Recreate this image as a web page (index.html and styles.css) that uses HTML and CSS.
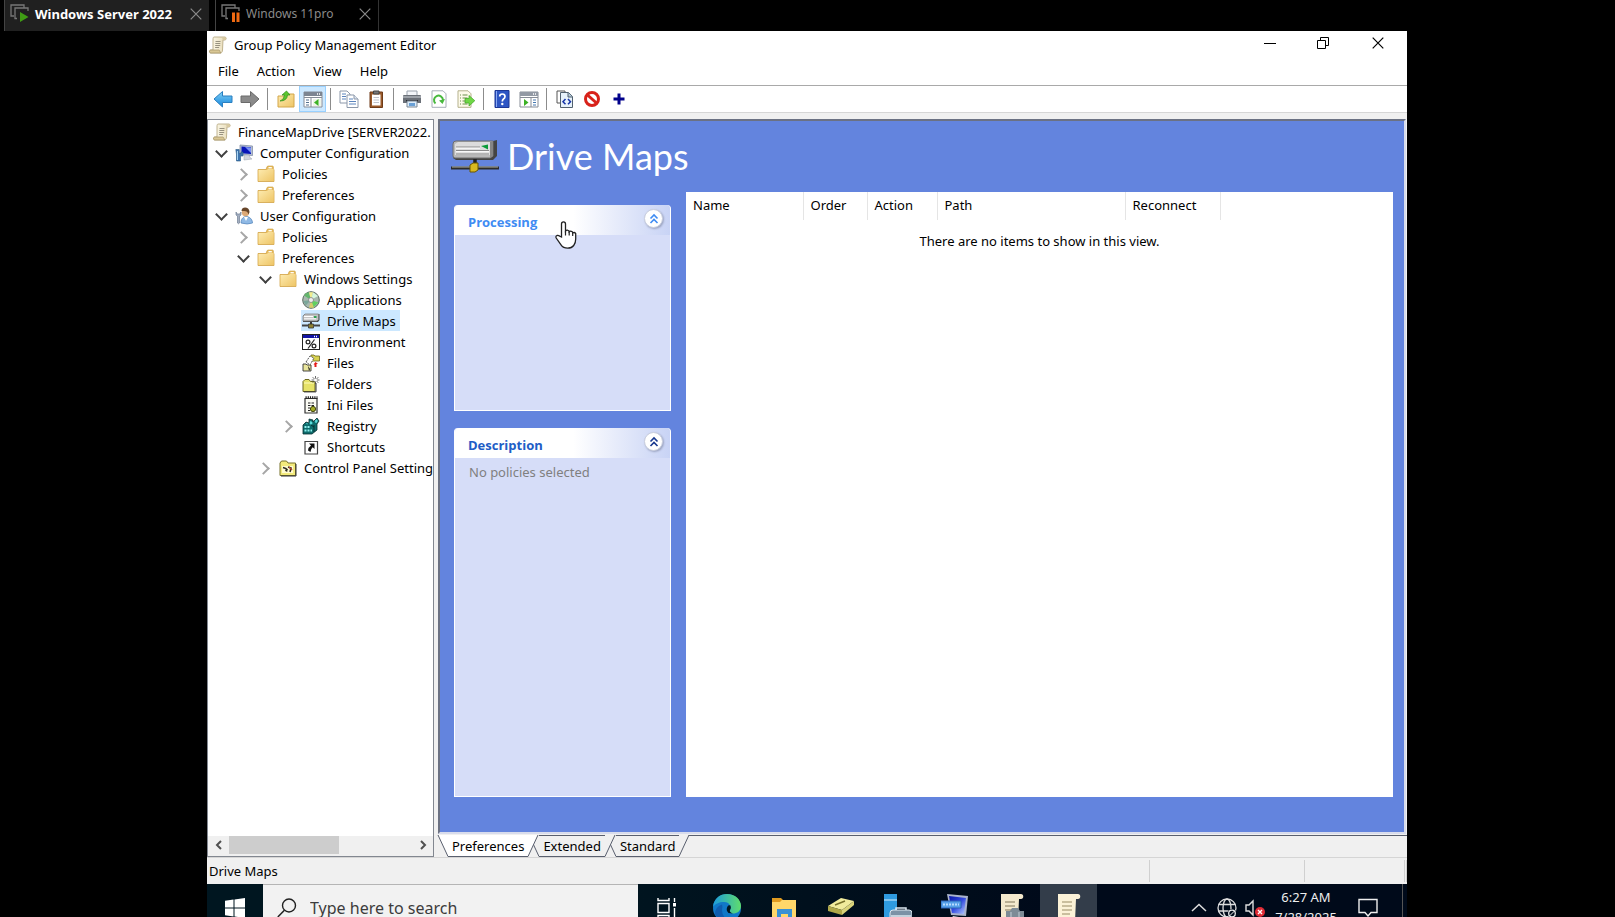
FILE: index.html
```html
<!DOCTYPE html>
<html lang="en">
<head>
<meta charset="utf-8">
<title>Group Policy Management Editor</title>
<link rel="stylesheet" href="styles.css">
</head>
<body>
<svg class="defs" aria-hidden="true">
  <defs>
    <linearGradient id="g-blue" x1="0" y1="0" x2="0" y2="1"><stop offset="0" stop-color="#7fd0f5"/><stop offset="1" stop-color="#1585dc"/></linearGradient>
    <linearGradient id="g-folder" x1="0" y1="0" x2="1" y2="1"><stop offset="0" stop-color="#fdebb0"/><stop offset="1" stop-color="#eec566"/></linearGradient>
    <linearGradient id="g-paper" x1="0" y1="0" x2="1" y2="0"><stop offset="0" stop-color="#fffdf0"/><stop offset="1" stop-color="#e6d9b4"/></linearGradient>
    <linearGradient id="g-edge" x1="0" y1="0" x2="1" y2="0"><stop offset="0" stop-color="#1c9bdc"/><stop offset="1" stop-color="#5fdd6c"/></linearGradient>
    <linearGradient id="g-screen" x1="0" y1="0" x2="1" y2="1"><stop offset="0" stop-color="#0a18a8"/><stop offset="0.5" stop-color="#3048e0"/><stop offset="1" stop-color="#b8ccff"/></linearGradient>
  </defs>
  <symbol id="scroll" viewBox="0 0 18 18">
    <path d="M5 1h11c1.500 0 1.500 3 0 3h-2l-.5 10c0 2-1 3-2 3H2c-2 0-2-3 0-3h2L4 4c0-2 .3-3 1-3z" fill="url(#g-paper)" stroke="#b9ab86" stroke-width=".9"/>
    <path d="M6.500 5.500h5M6.300 7.500h5M6.200 9.500h5M6.100 11.500h4" stroke="#8d8877" stroke-width=".9"/>
    <path d="M2 14h8c1 0 1 3 2 3H2c-2 0-2-3 0-3z" fill="#d9c795" stroke="#a39264" stroke-width=".7"/>
    <path d="M14 1.500c-1 .5-1 2 0 2.500h2c1.500-.3 1.500-2.500 0-3z" fill="#d8c9a0"/>
  </symbol>
  <symbol id="folder" viewBox="0 0 18 18">
    <path d="M1 4.500h8l1-2.500q.3-.9 1-.9h4.500q.8 0 .8.900v2.500h.7V16.500H1z" fill="#e9bd5c" stroke="#d2a54a" stroke-width=".8"/>
    <path d="M11.500 2.700h3.300" stroke="#fff" stroke-width="1.300"/>
    <path d="M1.500 5h8.500l1-.9h5.700v12H1.500z" fill="url(#g-folder)"/>
  </symbol>
  <symbol id="computer" viewBox="0 0 18 18">
    <path d="M5 1l12.500 1v9.500L5 10.500z" fill="#b5bfd3" stroke="#8490a8" stroke-width=".8"/>
    <path d="M6.500 2.500l9.500.8v6.700l-9.500-.8z" fill="#0816b8"/><path d="M10 3l6 .4v5.500z" fill="#7a92f5"/>
    <path d="M9 11h5l1 2.500 2 1.500-8 1z" fill="#d2d6dc" stroke="#9aa1ad" stroke-width=".5"/>
    <path d="M.8 5.500h3.400v4H6V8h2v4H5.500v5H1.500V10z" fill="#3d74ae" stroke="#265785" stroke-width=".6"/><path d="M2.500 7v9" stroke="#a9d5f5"/>
  </symbol>
  <symbol id="user" viewBox="0 0 18 18">
    <path d="M6 16c0-5 3-6.500 5.500-6.500S17.500 12 17.500 16q-5 2-11.500 0z" fill="#8fb9e5" stroke="#4d80b8" stroke-width=".7"/>
    <circle cx="10.500" cy="5.500" r="3.700" fill="#dca977"/><path d="M6.500 4c0-5 8-4.500 8 1l-1 2.500c-.5-2.500-2-3.500-4.500-3.500z" fill="#67462a"/>
    <path d="M9 10l2 4 2-4z" fill="#fff"/>
    <path d="M1 5v3l1.500 1.200V16q1 1.500 2 0V9.200L6 8V5L4.700 7H2.300z" fill="#a3aec0" stroke="#62728a" stroke-width=".6"/>
  </symbol>
  <symbol id="disc" viewBox="0 0 18 18">
    <circle cx="9" cy="9" r="8.300" fill="#a8b8ae" stroke="#5b6a60"/><path d="M9 9L2 4.500A8 8 0 0 1 7 1.300z" fill="#63b66c"/><path d="M9 9L7 1.300h4z" fill="#f2ed8d"/><path d="M9 9l2-7.700 5 3.700z" fill="#d5f6dc"/><path d="M9 9l2 7.700 5.500-5.200z" fill="#62d060"/><path d="M9 9l-2 7.700 5 0z" fill="#d6cc69"/><path d="M9 9l-7.700 1 2.400 4.500z" fill="#7ba79a"/><circle cx="9" cy="9" r="2.500" fill="#eee" stroke="#777" stroke-width=".7"/>
  </symbol>
  <symbol id="drive" viewBox="0 0 48 34" preserveAspectRatio="none">
    <path d="M7 2h35l4-1v16l-4 4H5l-3-2V7z" fill="#444"/>
    <path d="M5 2h37v15l-3 2H4q-2 0-2-2V5q0-3 3-3z" fill="#b9b9b9" stroke="#6d6d6d"/>
    <path d="M4 5l3-2h32v13H4z" fill="#dcdcdc"/><path d="M5 8h24M5 11.500h33M5 15h33" stroke="#8b8b8b" stroke-width="1.200"/><path d="M5 9.200h24M5 12.700h33" stroke="#fff"/>
    <path d="M30 7l7-1.500v5z" fill="#0a9a38"/><path d="M39 3l3-1v15l-3 2z" fill="#858585"/>
    <path d="M24 20v7" stroke="#222" stroke-width="3.500"/><path d="M0 29h48" stroke="#2c2c2c" stroke-width="3" /><path d="M1 28h46" stroke="#b0b0a0" stroke-width="1"/>
    <path d="M19 26l3-2h5v7l-3 2h-5z" fill="#d8b820" stroke="#6b5700"/>
  </symbol>
  <symbol id="drive-small" viewBox="0 0 18 18">
    <path d="M1 4l2-2h14.500v6L16 10H1z" fill="#444"/><path d="M1 4l2-2h13.500v5.500L15 9H1z" fill="#c4c4c4" stroke="#777" stroke-width=".7"/>
    <path d="M2 4.500h9M2 6.800h12" stroke="#fff"/><path d="M12 5h2.500" stroke="#0a9a38" stroke-width="1.600"/><path d="M0 13.500h6M12 13.500h6" stroke="#444" stroke-width="2"/><path d="M9 10v2" stroke="#333" stroke-width="2"/><path d="M6.500 12h5v4h-5z" fill="#8e8030" stroke="#333" stroke-width=".8"/>
  </symbol>
  <symbol id="env" viewBox="0 0 18 18">
    <rect x=".5" y="1.500" width="17" height="15" fill="#fff" stroke="#222"/><path d="M1 3.500h16" stroke="#1214a5" stroke-width="3"/><path d="M12 3.500h1m1 0h1" stroke="#fff" stroke-width="1.500"/><path d="M12.500 6.500L6 15.500" stroke="#222" stroke-width="1.200"/><circle cx="6" cy="9" r="1.900" fill="none" stroke="#222" stroke-width="1.200"/><circle cx="12" cy="13" r="1.900" fill="none" stroke="#222" stroke-width="1.200"/>
  </symbol>
  <symbol id="files" viewBox="0 0 18 18">
    <path d="M9 1h3l1 1h4.500v5H9z" fill="#d8d250" stroke="#6a661e" stroke-width=".8"/><path d="M1 10h3l1 1h4v6H1z" fill="#e9e59c" stroke="#333" stroke-width=".9"/><path d="M4 8l4-6 4 2-4 7z" fill="#fff" stroke="#555" stroke-dasharray="2 1"/><path d="M6 12l2 3-1 2z" fill="#111"/><path d="M11.500 10.500l2-2.500 2.500 2h-1.500v3h-2v-2.500z" fill="#e31a1a"/>
  </symbol>
  <symbol id="folders" viewBox="0 0 18 18">
    <path d="M1 6.500l2-2h4l1.500 2H13V16.500H1z" fill="#e6e268" stroke="#6d6920"/><path d="M2 8h10" stroke="#fffcc0"/><path d="M2 16.900h12V8" fill="none" stroke="#333"/><path d="M13.500 1v8M9.500 5h8M10.700 2.200l5.600 5.600M16.300 2.200l-5.600 5.600" stroke="#444" stroke-width=".8"/><circle cx="13.500" cy="5" r="1.500" fill="#fff"/>
  </symbol>
  <symbol id="ini" viewBox="0 0 18 18">
    <path d="M3 2.500h12V17H3z" fill="#fbfbf4" stroke="#333" stroke-width="1.200"/><path d="M3.500 1.500h12" stroke="#222" stroke-width="2.500" stroke-dasharray="1.200 1"/><path d="M6 7h2.500M9.500 7H12M6 9.500h2.500M9.500 9.500H12M6 12h2M6 14.500h2" stroke="#222" stroke-width="1.200"/><circle cx="11" cy="13" r="2.600" fill="#a5ac25" stroke="#40440a"/>
  </symbol>
  <symbol id="registry" viewBox="0 0 18 18">
    <path d="M1 8l3-3 3 1V2l4 1v2l4-4 2 3-2 3v6l-5 4H1z" fill="#0d6c6c" stroke="#062f30" stroke-width=".8"/><path d="M2.500 9h2v2h-2zM5.500 9h2v2h-2zM2.500 12.500h2v2h-2zM5.500 12.500h2v2h-2zM8.500 12.500h1.500v2H8.500z" fill="#8ff0ee"/><path d="M8 4.500l2 .6v2H8zM13 4l1.500-1.500 1 1.500-1.500 2zM4 6.500l2 .5" fill="#5cdedd" stroke="#5cdedd" stroke-width=".6"/><path d="M12 8v7M9 8l3 2" stroke="#062f30"/>
  </symbol>
  <symbol id="shortcut" viewBox="0 0 18 18">
    <path d="M3 3.500h12.500V16H3z" fill="#fff" stroke="#444" stroke-width="1.200"/><path d="M7 5.500h5.500V11l-1.800-1.800Q8.500 11 8.500 14L6 12.500Q6.500 9 9 7.500z" fill="#111"/>
  </symbol>
  <symbol id="panel" viewBox="0 0 18 18">
    <path d="M1 4l1.500-2h5L9 4h7.500v12.500H1z" fill="#f3ea7c" stroke="#77702a"/><path d="M3 7h11v7H3z" fill="#fffbd0"/><path d="M4 8.500l3 1 1 3M9 8l3 1-1 4M6.500 12l2-2" fill="none" stroke="#2b2920" stroke-width="1.500"/><path d="M10 8l3 3" stroke="#b1452c" stroke-width="1.400"/><path d="M2 17h15V5" fill="none" stroke="#333"/>
  </symbol>
  <symbol id="vm" viewBox="0 0 20 20">
    <path d="M4 12H1V1h13v3M7 14.500H5V4h13v3" fill="none" stroke="#777" stroke-width="1.300"/>
  </symbol>
  <symbol id="x" viewBox="0 0 12 12"><path d="M.7.7l10.600 10.600M11.300.7L.7 11.300" fill="none" stroke="currentColor" stroke-width="1.200"/></symbol>
  <symbol id="arrow" viewBox="0 0 20 18"><path d="M1 9l8.500-7.500V6H19v6.500H9.500v4.500z" fill="var(--f)" stroke="var(--s)"/></symbol>
</svg>

<nav class="vm-tabs" aria-label="Virtual machines">
  <div class="vm-tab vm-active">
    <svg class="i20" viewBox="0 0 20 20"><use href="#vm"/><path d="M10 8l8.500 5-8.500 5z" fill="#3f9c14"/></svg>
    <button class="vm-name">Windows Server 2022</button>
    <button class="vm-close" aria-label="Close Windows Server 2022"><svg class="i12"><use href="#x"/></svg></button>
  </div>
  <div class="vm-tab vm-idle">
    <svg class="i20" viewBox="0 0 20 20"><use href="#vm"/><path d="M11 8.500h3v9.500h-3zM15.500 8.500h3v9.500h-3z" fill="#f06a12"/></svg>
    <button class="vm-name">Windows 11pro</button>
    <button class="vm-close" aria-label="Close Windows 11pro"><svg class="i12"><use href="#x"/></svg></button>
  </div>
</nav>

<main class="guest">
  <header class="titlebar">
    <svg class="i18"><use href="#scroll"/></svg>
    <h1 class="title">Group Policy Management Editor</h1>
    <div class="caption">
      <button aria-label="Minimize"><svg class="i12" viewBox="0 0 12 12"><path d="M0 6.500h12" stroke="#000"/></svg></button>
      <button aria-label="Restore"><svg class="i12" viewBox="0 0 12 12"><path d="M.5 3.500h8v8h-8zM3.500 3.500v-3h8v8h-3" fill="none" stroke="#000"/></svg></button>
      <button aria-label="Close"><svg class="i12"><use href="#x"/></svg></button>
    </div>
  </header>
  <nav class="menubar" aria-label="Menu">
    <button>File</button><button>Action</button><button>View</button><button>Help</button>
  </nav>
  <div class="toolbar" role="toolbar">
    <button aria-label="Back"><svg class="i20 blue"><use href="#arrow"/></svg></button>
    <button aria-label="Forward"><svg class="i20 flip"><use href="#arrow"/></svg></button>
    <span class="sep"></span>
    <button aria-label="Up one level"><svg class="i18" viewBox="0 0 18 18"><path d="M1 6h7l1.500-2H17v13H1z" fill="url(#g-folder)" stroke="#d3a64b"/><path d="M3 11q4-1 4.500-6H5l4.500-4L13 5h-2.500Q10 11 3 11z" fill="#5cc52f" stroke="#2f8f18" stroke-width=".7"/></svg></button>
    <button class="pressed" aria-label="Show or hide console tree"><svg class="i20" viewBox="0 0 20 18"><path d="M1 2h18v15H1z" fill="#fff" stroke="#868c96"/><path d="M1 4h18" stroke="#7d8591" stroke-width="4"/><path d="M14 4h1m1 0h1" stroke="#fff" stroke-width="1.500"/><path d="M1 7.500h18M8 8v9" stroke="#868c96"/><path d="M3 10h3M3 12.500h3M3 15h3" stroke="#55718f"/><path d="M10 9h8v7h-8z" fill="#edf4e8"/><path d="M15.500 9v7L11 12.500z" fill="#3cb125"/></svg></button>
    <span class="sep"></span>
    <button aria-label="Copy"><svg class="i20" viewBox="0 0 20 18"><g fill="#fff" stroke="#8c98aa"><path d="M1 1h7l3 3v9H1z"/><path d="M8 5h7l4 4v8.500H8z"/><path d="M15 5v4h4" fill="#dde5f0"/></g><path d="M3 4h4M3 6.500h4M3 9h4M10 9h4M10 11.500h7M10 14h7" stroke="#5b84bd"/></svg></button>
    <button aria-label="Paste"><svg class="i18" viewBox="0 0 18 18"><path d="M3 2h12.500v15.500H3z" fill="#9a5a2a" stroke="#6e3b18"/><path d="M5 4.500h8.500V15.500H5z" fill="#fff"/><path d="M6.500 1h5.500v3H6.500z" fill="#777" stroke="#444"/><path d="M6.500 7.500h5.500M6.500 10h5.500M6.500 12.500h5.500" stroke="#c0c4cc"/></svg></button>
    <span class="sep"></span>
    <button aria-label="Print"><svg class="i20" viewBox="0 0 20 18"><path d="M5 1h10v6H5z" fill="#f4f6fa" stroke="#9ba3ae"/><path d="M1 6q0-1 1-1h16q1 0 1 1v7H1z" fill="#6b7078"/><path d="M1 6h18v2H1z" fill="#9da2a9"/><path d="M4 10h12v2H4z" fill="#2a2d31"/><path d="M5 11h10v6H5z" fill="#dcecfa" stroke="#7a8794"/><path d="M7 13h6v3H7z" fill="#69a0d6"/></svg></button>
    <button aria-label="Refresh"><svg class="i18" viewBox="0 0 18 18"><path d="M2 .8h11l3 3v13.500H2z" fill="#fff" stroke="#a7aeb8"/><path d="M5.500 13.500A4.500 4.500 0 1 1 13 10" fill="none" stroke="#48b93d" stroke-width="2"/><path d="M9 10.500l6-1.500-2.500 5z" fill="#48b93d"/></svg></button>
    <button aria-label="Export list"><svg class="i18" viewBox="0 0 18 18"><path d="M1 .8h10l3 3v13.500H1z" fill="#fdfae9" stroke="#b5b18d"/><path d="M3 5h1m1.500 0h5M3 8h1m1.500 0h5M3 11h1m1.500 0h5M3 14h1m1.500 0h5" stroke="#6a8f4a"/><path d="M8 8.500h4V5.500l5.800 5.200L12 16v-3H8z" fill="#6fd745" stroke="#3ea324" stroke-width=".7"/></svg></button>
    <span class="sep"></span>
    <button aria-label="Help"><svg class="i18" viewBox="0 0 18 18"><path d="M2 .5h14v17H2z" fill="#2d55c4" stroke="#1c3795"/><path d="M3.500 1v16" stroke="#8aa9f2"/><path d="M6.700 6.500Q6.700 4 9.300 4 12 4 12 6.500q0 1.500-1.500 2.500Q9.300 10 9.300 11.500" fill="none" stroke="#fff" stroke-width="1.700"/><circle cx="9.300" cy="14" r="1.200" fill="#fff"/></svg></button>
    <button aria-label="Show or hide action pane"><svg class="i20" viewBox="0 0 20 18"><path d="M1 2h18v15H1z" fill="#fff" stroke="#868c96"/><path d="M1 4h18" stroke="#9299a4" stroke-width="4"/><path d="M14 4h1m1 0h1" stroke="#fff" stroke-width="1.500"/><path d="M1 7.500h18M12 8v9" stroke="#868c96"/><path d="M14 10h3M14 12.500h3M14 15h3" stroke="#4678b0"/><path d="M5 9v7l4.500-3.500z" fill="#3cb125"/></svg></button>
    <span class="sep"></span>
    <button aria-label="View source"><svg class="i18" viewBox="0 0 18 18"><path d="M1 1h8v12H1z" fill="#fff" stroke="#555"/><path d="M4.500 2.500h8l4 4v11h-12z" fill="#e7f2fb" stroke="#51606e"/><path d="M12 2.500v4.500h4.500" fill="#b3c8d8" stroke="#51606e"/><path d="M9.500 9L7 11.700l2.500 2.600M12 9l2.500 2.700-2.500 2.600" fill="none" stroke="#1634a8" stroke-width="1.500"/></svg></button>
    <button aria-label="Disable"><svg class="i18" viewBox="0 0 18 18"><circle cx="9" cy="9" r="6.500" fill="#fff" stroke="#d8221a" stroke-width="3"/><path d="M4.500 5l9 8" stroke="#d8221a" stroke-width="3"/></svg></button>
    <button aria-label="Add"><svg class="i18" viewBox="0 0 18 18"><path d="M9 3.500v11M3.500 9h11" stroke="#00008b" stroke-width="3"/></svg></button>
  </div>

  <div class="workspace">
    <section class="tree-pane">
      <ul class="tree">
        <li class="root"><button class="node"><svg class="i18"><use href="#scroll"/></svg>FinanceMapDrive [SERVER2022.</button></li>
        <li class="l1"><i class="tw open"></i><button class="node"><svg class="i18"><use href="#computer"/></svg>Computer Configuration</button></li>
        <li class="l2"><i class="tw"></i><button class="node"><svg class="i18"><use href="#folder"/></svg>Policies</button></li>
        <li class="l2"><i class="tw"></i><button class="node"><svg class="i18"><use href="#folder"/></svg>Preferences</button></li>
        <li class="l1"><i class="tw open"></i><button class="node"><svg class="i18"><use href="#user"/></svg>User Configuration</button></li>
        <li class="l2"><i class="tw"></i><button class="node"><svg class="i18"><use href="#folder"/></svg>Policies</button></li>
        <li class="l2"><i class="tw open"></i><button class="node"><svg class="i18"><use href="#folder"/></svg>Preferences</button></li>
        <li class="l3"><i class="tw open"></i><button class="node"><svg class="i18"><use href="#folder"/></svg>Windows Settings</button></li>
        <li class="l4"><i class="tw none"></i><button class="node"><svg class="i18"><use href="#disc"/></svg>Applications</button></li>
        <li class="l4"><i class="tw none"></i><button class="node selected"><svg class="i18"><use href="#drive-small"/></svg>Drive Maps</button></li>
        <li class="l4"><i class="tw none"></i><button class="node"><svg class="i18"><use href="#env"/></svg>Environment</button></li>
        <li class="l4"><i class="tw none"></i><button class="node"><svg class="i18"><use href="#files"/></svg>Files</button></li>
        <li class="l4"><i class="tw none"></i><button class="node"><svg class="i18"><use href="#folders"/></svg>Folders</button></li>
        <li class="l4"><i class="tw none"></i><button class="node"><svg class="i18"><use href="#ini"/></svg>Ini Files</button></li>
        <li class="l4"><i class="tw"></i><button class="node"><svg class="i18"><use href="#registry"/></svg>Registry</button></li>
        <li class="l4"><i class="tw none"></i><button class="node"><svg class="i18"><use href="#shortcut"/></svg>Shortcuts</button></li>
        <li class="l3"><i class="tw"></i><button class="node"><svg class="i18"><use href="#panel"/></svg>Control Panel Setting</button></li>
      </ul>
      <div class="hscroll">
        <button aria-label="Scroll left"><svg class="i12" viewBox="0 0 12 12"><path d="M8 2L4 6l4 4" fill="none" stroke="#505050" stroke-width="2"/></svg></button>
        <div class="track"><div class="thumb"></div></div>
        <button aria-label="Scroll right"><svg class="i12" viewBox="0 0 12 12"><path d="M4 2l4 4-4 4" fill="none" stroke="#505050" stroke-width="2"/></svg></button>
      </div>
    </section>

    <section class="result">
      <div class="pane">
        <div class="pane-head"><svg class="drive-big"><use href="#drive"/></svg><h2>Drive Maps</h2></div>
        <div class="pane-body">
          <div class="cards">
            <article class="card processing">
              <header><h3>Processing</h3><button class="fold" aria-label="Collapse Processing"><svg class="i12" viewBox="0 0 12 12"><path d="M2.500 5.500L6 2l3.500 3.500M2.500 10L6 6.500 9.500 10" fill="none" stroke="currentColor" stroke-width="1.600"/></svg></button></header>
              <svg class="cursor" viewBox="0 0 22 28"><path d="M6.500 16V3q0-2.200 2-2.200t2 2.200v7q1-1.200 2.500-.7 1.200.3 1.200 1.400 1-.9 2.300-.4 1.200.4 1.200 1.500 2-.8 3 .7V18q0 4-2 6.500-2 2.700-6 2.700-4.500 0-6.500-3L1.200 17q-.8-2 .8-2.500 1.500-.3 2.800.8z" fill="#fff" stroke="#222" stroke-width="1.300"/><path d="M10.500 10v4.500M14.200 10.500v4M17.700 12v3" stroke="#222" stroke-width="1.200"/></svg>
            </article>
            <article class="card description">
              <header><h3>Description</h3><button class="fold" aria-label="Collapse Description"><svg class="i12" viewBox="0 0 12 12"><path d="M2.500 5.500L6 2l3.500 3.500M2.500 10L6 6.500 9.500 10" fill="none" stroke="currentColor" stroke-width="1.600"/></svg></button></header>
              <p>No policies selected</p>
            </article>
          </div>
          <div class="list">
            <table>
              <colgroup><col class="c-name"><col class="c-order"><col class="c-action"><col class="c-path"><col class="c-rec"><col></colgroup>
              <thead><tr><th>Name</th><th>Order</th><th>Action</th><th>Path</th><th>Reconnect</th><td></td></tr></thead>
              <tbody><tr><td colspan="6" class="empty">There are no items to show in this view.</td></tr></tbody>
            </table>
          </div>
        </div>
      </div>
      <div class="view-tabs">
        <button class="vt current"><svg viewBox="0 0 10 22"><path d="M0 0L10 21.500V0z"/><path class="ln" d="M0 0l10 21.500"/></svg><span>Preferences</span><svg viewBox="0 0 10 22"><path d="M10 0L0 21.500V0z"/><path class="ln" d="M10 0L0 21.500"/></svg></button>
        <button class="vt second"><svg viewBox="0 0 10 22"><path d="M0 0L10 21.500V0z"/><path class="ln" d="M0 0l10 21.500"/></svg><span>Extended</span><svg viewBox="0 0 10 22"><path d="M10 0L0 21.500V0z"/><path class="ln" d="M10 0L0 21.500"/></svg></button>
        <button class="vt third"><svg viewBox="0 0 10 22"><path d="M0 0L10 21.500V0z"/><path class="ln" d="M0 0l10 21.500"/></svg><span>Standard</span><svg viewBox="0 0 10 22"><path d="M10 0L0 21.500V0z"/><path class="ln" d="M10 0L0 21.500"/></svg></button>
      </div>
    </section>
  </div>

  <footer class="status"><span class="msg">Drive Maps</span><span class="s1"></span><span class="s2"></span><span class="s3"></span></footer>

  <div class="taskclip">
    <div class="taskbar">
      <button class="start" aria-label="Start"><svg class="i20" viewBox="0 0 20 20"><path d="M0 2.800L8.500 1.600V9.400H0zM9.500 1.500L20 0v9.400H9.500zM0 10.500h8.500v7.900L0 17.200zM9.500 10.500H20V20L9.500 18.500z" fill="#fff"/></svg></button>
      <label class="search"><svg class="i20" viewBox="0 0 20 20"><circle cx="12" cy="7.500" r="6.500" fill="none" stroke="#222" stroke-width="1.400"/><path d="M7.400 12.200L.8 19" stroke="#222" stroke-width="1.500"/></svg><input type="text" placeholder="Type here to search" aria-label="Search"></label>
      <button class="app view" aria-label="Task View"><svg class="i20" viewBox="0 0 20 20"><path d="M1 5.500h11v9H1zM1 0v2.500h11V0M1 20v-2.500h11V20M17.500 0v4M17.500 10v10" fill="none" stroke="#fff" stroke-width="1.400"/><path d="M16 5h3v3.500h-3z" fill="#fff"/></svg></button>
      <button class="app" aria-label="Edge"><svg class="i28" viewBox="0 0 28 28"><circle cx="14" cy="14" r="14" fill="#1178c8"/><path d="M0 13C1 4 7 0 14 0c8 0 14 5.500 14 12 0 5-4 7.500-8 7.500-3 0-4-1.500-3-3C18.500 13 17 8 11 8 6 8 2 10 0 13z" fill="url(#g-edge)"/><path d="M9.500 13q-2 8 5 13-9 2-12.500-6Q2 13 9 10.500z" fill="#0f5cae"/><path d="M15.500 19q-3-3-1-6.500 1-2 3-1 1 2.500-.5 4.500-1 2 3 3.500z" fill="#001620"/></svg></button>
      <button class="app" aria-label="File Explorer"><svg class="i28" viewBox="0 0 28 28"><path d="M2 4h9l2 2h13v20H2z" fill="#e09b20"/><path d="M2 8h8l2-2h14v20H2z" fill="#ffd76a"/><path d="M7 28V15h15v13h-4v-8h-7v8z" fill="#3a91d4"/></svg></button>
      <button class="app" aria-label="Package"><svg class="i28" viewBox="0 0 28 28"><path d="M1 12L14 4l13 3-12 9z" fill="#f0eb9c"/><path d="M1 12l14 4v5L1 17z" fill="#b0a849"/><path d="M15 16l12-9v4l-12 10z" fill="#d9d37a"/><path d="M8 11l10-4" stroke="#77702a" stroke-width="1.500"/></svg></button>
      <button class="app" aria-label="Server Manager"><svg class="i28" viewBox="0 0 28 28"><path d="M0 0h13v28H0z" fill="#2f9be0"/><path d="M0 6h13" stroke="#d5efff"/><rect x="6" y="16" width="22" height="16" rx="3" fill="#7c92a6" stroke="#dbe7f0"/><path d="M12 16v-2h10v2M7 22h20" fill="none" stroke="#dbe7f0" stroke-width="1.500"/></svg></button>
      <button class="app" aria-label="Run"><svg class="i28" viewBox="0 0 28 28"><path d="M6 0l21 2-2 20-15-1z" fill="#aab4cc"/><path d="M8 2l17 2-2 16-12-1z" fill="url(#g-screen)"/><path d="M0 7h20v7H0z" fill="#56a0e8" stroke="#2b62b8"/><path d="M2 10.500h16" stroke="#b8dcff" stroke-width="2" stroke-dasharray="2 1"/><path d="M12 22l6 1 6 5H8z" fill="#d4d9e2"/></svg></button>
      <button class="app" aria-label="Group Policy Management"><svg class="i28" viewBox="0 0 28 28"><path d="M3 0h20c3 0 3 5 0 5h-2l-1 23H0V24h3z" fill="#f3e9cd"/><path d="M7 8h10M7 12h10M7 16h8" stroke="#a69c80" stroke-width="1.300"/><path d="M8 17h4l2-3h6l2 3h4v11H8z" fill="#7d8b96"/><path d="M13 18v10M21 18v10" stroke="#c4ced6"/></svg></button>
      <button class="app running" aria-label="Group Policy Management Editor"><svg class="i28" viewBox="0 0 28 28"><path d="M3 0h20c3 0 3 5 0 5h-2l-1 23H0V24h3z" fill="#fbf2d7"/><path d="M7 8h10M7 12h10M7 16h10M7 20h8" stroke="#bbae8c" stroke-width="1.300"/></svg></button>
      <div class="tray">
        <button aria-label="Show hidden icons"><svg class="i20" viewBox="0 0 20 20"><path d="M3 13l7-6.500 7 6.500" fill="none" stroke="#ddd" stroke-width="1.500"/></svg></button>
        <button aria-label="Network"><svg class="i20" viewBox="0 0 20 20"><g fill="none" stroke="#ddd" stroke-width="1.300"><circle cx="10" cy="10" r="9"/><ellipse cx="10" cy="10" rx="4" ry="9"/><path d="M1.500 6.500h17M1.500 13h17"/></g><circle cx="15" cy="15.500" r="4.500" fill="#000a1a"/><circle cx="15" cy="15.500" r="3.300" fill="none" stroke="#eee" stroke-width="1.300"/><path d="M12.700 17.800l4.600-4.600" stroke="#eee"/></svg></button>
        <button aria-label="Volume muted"><svg class="i20" viewBox="0 0 20 20"><path d="M1 7h3l4-4v14l-4-4H1z" fill="none" stroke="#ddd" stroke-width="1.400"/><circle cx="15" cy="14" r="5" fill="#e02b35"/><path d="M13 12l4 4M17 12l-4 4" stroke="#fff" stroke-width="1.300"/></svg></button>
        <time class="clock"><span>6:27 AM</span><span>7/28/2025</span></time>
        <button class="notes" aria-label="Notifications"><svg class="i20" viewBox="0 0 20 20"><path d="M1 1.500h18v13h-6l-3 3.500-3-3.500H1z" fill="none" stroke="#eee" stroke-width="1.400"/></svg></button>
      </div>
    </div>
  </div>
</main>
</body>
</html>
```

FILE: styles.css
```css
* { box-sizing: border-box; }
body {
  margin: 0; height: 100vh; overflow: hidden; background: #000; color: #000;
  display: flex; flex-direction: column;
  font: 13px/18px "Noto Sans", "Open Sans", sans-serif;
}
button { margin: 0; padding: 0; border: 0; background: none; color: inherit; font: inherit; display: flex; align-items: center; justify-content: center; }
svg { flex: none; display: block; }
.defs { position: absolute; width: 0; height: 0; }
.i12 { width: 12px; height: 12px; }
.i18 { width: 18px; height: 18px; }
.i20 { width: 20px; height: 18px; }
.i28 { width: 28px; height: 28px; }
h1, h2, h3, p, ul { margin: 0; padding: 0; }

/* host tab strip */
.vm-tabs { display: flex; gap: 6px; padding-left: 4px; height: 31px; flex: none; }
.vm-tab { display: flex; align-items: center; border-left: 1px solid #444; padding: 0 7px 3px 5px; }
.vm-tab .i20 { height: 20px; }
.vm-name { flex: 1; justify-content: flex-start; padding-left: 5px; white-space: nowrap; }
.vm-active { width: 205px; background: #202020; color: #fff; font-weight: 700; }
.vm-idle { width: 164px; color: #8a8a8a; border-right: 1px solid #333; }
.vm-idle .vm-name { font-size: 12px; }
.vm-close { color: #8a8a8a; }

/* guest window */
.guest { flex: 1; min-height: 0; margin: 0 208px 0 207px; display: flex; flex-direction: column; background: #f0f0f0; }
.titlebar { display: flex; align-items: center; height: 27px; padding-left: 2px; background: #fff; flex: none; }
.title { font-size: 13px; font-weight: 400; padding-left: 7px; flex: 1; }
.caption { display: flex; padding-bottom: 4px; }
.caption button { width: 53px; }
.caption button:last-child { width: 58px; }
.menubar { display: flex; background: #fff; height: 27px; padding: 0 2px 2px; flex: none; }
.menubar button { padding: 0 9px; }
.toolbar { display: flex; height: 28px; padding-left: 2px; background: #fff; border-top: 1px solid #a9a9a9; border-bottom: 1px solid #d6d6d6; flex: none; }
.toolbar button { width: 27px; }
.toolbar .pressed { background: #cce8ff; border: 1px solid #99d1ff; }
.sep { width: 1px; margin: 2px 4px; background: #8c8c8c; }
.blue { --f: url(#g-blue); --s: #2a7fc0; }
.flip { --f: #8a8a8a; --s: #6a6a6a; transform: scaleX(-1); }

.workspace { flex: 1; min-height: 0; display: flex; gap: 4px; padding-top: 6px; border-bottom: 1px solid #d5d5d5; }
.tree-pane { width: 227px; background: #fff; border: 1px solid #828790; display: flex; flex-direction: column; overflow: hidden; }
.tree { list-style: none; flex: 1; padding-top: 1px; overflow: hidden; }
.tree li { display: flex; height: 21px; white-space: nowrap; }
.root { padding-left: 5px; }
.l1 { padding-left: 5px; }
.l2 { padding-left: 27px; }
.l3 { padding-left: 49px; }
.l4 { padding-left: 72px; }
.node { gap: 7px; padding: 0 4px 0 1px; justify-content: flex-start; }
.root .node { padding-left: 0; }
.selected { background: #cce8ff; }
.tw { width: 16px; margin-right: 5px; display: flex; align-items: center; justify-content: center; flex: none; }
.tw::before { content: ""; width: 7px; height: 7px; border: solid #a6a6a6; border-width: 2px 2px 0 0; transform: rotate(45deg); margin-right: 4px; margin-top: 2px; }
.tw.open::before { border-color: #404040; transform: rotate(135deg); margin: 0 0 3px; }
.tw.none::before { display: none; }
.hscroll { display: flex; align-items: flex-start; height: 20px; background: #f0f0f0; flex: none; }
.hscroll button { width: 21px; height: 18px; }
.track { flex: 1; }
.thumb { width: 60%; height: 18px; background: #cdcdcd; }

.result { flex: 1; min-width: 0; display: flex; flex-direction: column; }
.pane { flex: 1; min-height: 0; background: #6384de; border: solid #d8dcec; border-width: 2px; border-top-color: #6b7183; border-left-color: #6b7183; padding: 0 11px 35px 14px; margin-right: 1px; display: flex; flex-direction: column; }
.pane-head { display: flex; align-items: center; height: 71px; padding-bottom: 1px; color: #fff; gap: 8px; margin-left: -3px; flex: none; }
.drive-big { width: 48px; height: 34px; }
h2 { font: 400 36px/48px Lato, sans-serif; }
.pane-body { flex: 1; min-height: 0; display: flex; gap: 15px; }
.cards { width: 217px; padding-top: 13px; display: flex; flex-direction: column; gap: 17px; flex: none; }
.card { background: #d6ddf8; border: solid #fff; border-width: 0 1px 1px; border-radius: 4px 4px 0 0; position: relative; }
.processing { height: 206px; color: #3f8cf3; }
.description { flex: 1; color: #215dc6; }
.card header { height: 30px; padding: 0 7px 3px 13px; display: flex; align-items: center; justify-content: space-between; background: linear-gradient(90deg, #fff 55%, #c8d3f5); border-radius: 4px 4px 0 0; }
h3 { font: 700 13px/18px "Open Sans", sans-serif; padding-top: 6px; }
.fold { width: 19px; height: 19px; border-radius: 50%; background: #fff; border: 1px solid #c9cede; box-shadow: 1px 1px 2px #9aa3c0; }
.description .fold { color: #17388f; }
.card p { padding: 5px 14px; color: #808080; }
.cursor { position: absolute; left: 100px; top: 16px; width: 22px; height: 28px; }

.list { flex: 1; min-width: 0; background: #fff; }
table { width: 100%; table-layout: fixed; border-collapse: collapse; }
th { font-weight: 400; text-align: left; height: 28px; padding: 0 7px 2px; border-right: 1px solid #e5e5e5; }
td { padding: 0; }
.c-name { width: 117px; }
.c-order { width: 64px; }
.c-action { width: 70px; }
.c-path { width: 188px; }
.c-rec { width: 95px; }
.empty { text-align: center; height: 41px; }

.view-tabs { display: flex; height: 23px; padding-top: 1px; flex: none; background: linear-gradient(#f0f0f0 1px, #595f6e 1px, #595f6e 2px, #f0f0f0 2px); }
.vt { height: 22px; position: relative; z-index: 1; fill: #f0f0f0; margin-left: -9px; }
.vt svg { width: 10px; height: 22px; overflow: visible; }
.vt span { height: 22px; padding: 1px 4px 0; background: #f0f0f0; border: solid #595f6e; border-width: 1px 0; }
.vt .ln { fill: none; stroke: #595f6e; }
.vt.current { z-index: 3; fill: #fff; margin-left: 0; }
.vt.current span { background: #fff; border-top-color: #fff; }
.vt.second { z-index: 2; }

.status { display: flex; height: 26px; flex: none; }
.status span { border-right: 1px solid #d0d0d0; margin: 2px 0; }
.msg { flex: 1; padding-left: 2px; line-height: 23px; }
.s1 { width: 155px; }
.s2 { width: 100px; }
.s3 { width: 2px; }

/* taskbar, its lower part below the fold */
.taskclip { height: 33px; overflow: hidden; flex: none; }
.taskbar { height: 48px; display: flex; background: linear-gradient(90deg, #001620 30%, #000a1a 70%); color: #eee; }
.taskbar .i20 { height: 20px; }
.start { width: 56px; }
.search { width: 375px; background: #f2f2f2; border-top: 1px solid #b5b5b5; display: flex; align-items: center; gap: 13px; padding: 0 0 2px 14px; }
.search input { flex: 1; min-width: 0; border: 0; background: none; padding: 0; font: 16px/24px "Noto Sans", sans-serif; }
.search input::placeholder { color: #3c3c3c; opacity: 1; }
.app { width: 57px; }
.view { margin-right: 3px; }
.running { background: #333d4a; }
.tray { flex: 1; display: flex; justify-content: flex-end; border-right: 1px solid #555; margin-right: 4px; padding-right: 9px; }
.tray button { width: 28px; }
.clock { width: 74px; display: flex; flex-direction: column; align-items: center; padding-top: 3px; line-height: 20px; }
.tray .notes { width: 50px; }
```
